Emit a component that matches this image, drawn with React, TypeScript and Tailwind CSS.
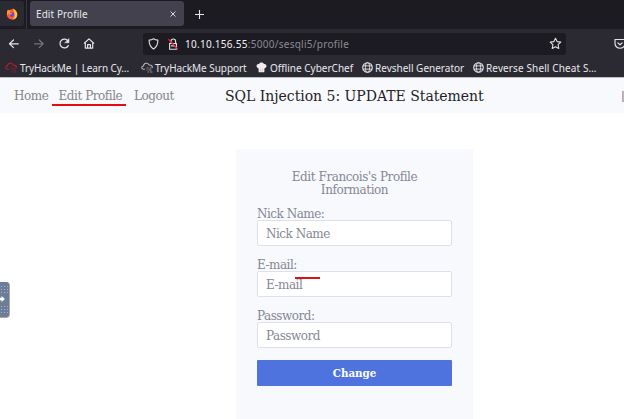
import React from "react";

const ui = "font-['Noto_Sans',sans-serif]";

function Fox() {
  return (
    <svg width="12" height="12" viewBox="0 0 12 12" className="shrink-0">
      <circle cx="6" cy="6.4" r="5.2" fill="#ff5a36" />
      <path d="M6.5 .2C9.5 1.5 11.6 4 11.3 7c-.3 3-2.5 4.6-5 4.7C9 10 9.6 6 6.5.2Z" fill="#ffc531" />
      <path d="M1 3.5 2 1.5l1.3 1.3L5 2.5 4 4.3 1 7Z" fill="#ff9a2b" />
      <circle cx="6" cy="6.6" r="2.3" fill="#7542e5" />
      <path d="M2.5 5c1.7-.8 3 0 4 .7-1.3 0-1.2 1.1-2.6 1.2Z" fill="#ff8a26" />
    </svg>
  );
}

function Cloud({ color }: { color: string }) {
  return (
    <svg width="12" height="12" viewBox="0 0 12 12" fill="none" stroke={color} strokeWidth="1.1" className="shrink-0">
      <path d="M4 7.2H2.5C0 7 .2 4 2.5 4 2.7.8 7 .4 8 3c2.4-.3 3.7 1.3 3.2 3" />
      <path d="M5.5 6h2M8.5 6h2M5.5 8h1M7.5 8h3M6.5 10h1.5M9 10h2.5" strokeOpacity=".75" />
    </svg>
  );
}

function Globe() {
  return (
    <svg width="11" height="11" viewBox="0 0 11 11" fill="none" stroke="#e6e6ea" className="shrink-0">
      <circle cx="5.5" cy="5.5" r="4.8" strokeWidth="1.1" />
      <ellipse cx="5.5" cy="5.5" rx="2.1" ry="4.8" strokeWidth=".9" />
      <path d="M1 3.9h9M1 7.1h9" strokeWidth=".9" />
    </svg>
  );
}

function ChefHat() {
  return (
    <svg width="11" height="11" viewBox="0 0 11 11" fill="#eeeeee" className="shrink-0">
      <path d="M2.5 6.2C-.3 5.5 0 1.8 2.8 2 4-.1 7-.1 8.1 2c3-.2 3.2 3.5.4 4.2L8.3 10.3H2.7Z" />
      <path d="M4.4 6.5v3M6.3 6.5v3" stroke="#b9b9bd" strokeWidth=".5" />
    </svg>
  );
}

function Field({ label, text, marked }: { label: string; text: string; marked?: boolean }) {
  return (
    <div className="mb-[11px] h-[40px]">
      <div className="h-[14px] text-[12px] leading-[16px] tracking-[-0.5px]">{label}</div>
      <div className="relative flex h-[26px] items-center rounded-[2px] border border-[#dfe0ea] bg-white pl-[8px] pt-px text-[12px] tracking-[-0.5px] text-[#858894]">
        {text}
        {marked && <span className="absolute left-[37px] top-[5px] h-[2px] w-[25px] bg-[#dc1018]" />}
      </div>
    </div>
  );
}

export default function App() {
  return (
    <div className="relative flex h-[419px] w-[624px] flex-col overflow-hidden bg-white font-['DejaVu_Serif',serif]">
      <div className={`h-[78px] shrink-0 border-b border-[#bdbdc2] bg-[#2b2a33] text-[#e8e8ec] ${ui}`}>
        <div className="flex h-[29px] bg-[#1c1b22]">
          <div className="mt-px flex h-[25px] w-[24px] items-center justify-center rounded-r-[3px] bg-[#2b2a33]">
            <Fox />
          </div>
          <div className="ml-[2px] h-[29px] w-px bg-[#36353d]" />
          <div className="ml-[3px] mt-px flex h-[25px] w-[154px] items-center justify-between rounded-[3px] bg-[#42414d] pl-[6px] pr-[8px]">
            <span className="whitespace-nowrap pt-px text-[10px] tracking-[0.08px]">Edit Profile</span>
            <svg width="6" height="6" viewBox="0 0 6 6" stroke="#d8d8dd"><path d="m.5.5 5 5m0-5-5 5" /></svg>
          </div>
          <svg className="ml-[11px] mt-[10px]" width="9" height="9" viewBox="0 0 9 9" stroke="#e8e8ec" strokeWidth="1.1"><path d="M4.5 0v9M0 4.5h9" /></svg>
        </div>
        <div className="flex h-[29px] items-center">
          <svg width="143" height="29" viewBox="0 0 143 29" fill="none" stroke="#e4e4e8" strokeWidth="1.2" strokeLinecap="round" strokeLinejoin="round" className="shrink-0">
            <path d="M18.3 14.8H9.5m4-3.8-4 3.8 4 3.8" />
            <path d="M34.5 14.8h8.7m-4-3.8 4 3.8-4 3.8" stroke="#74737d" />
            <path d="M68.1 12.1a4.4 4.4 0 1 0 .2 4.5" />
            <path d="M69 9.8v4h-4Z" fill="#e4e4e8" strokeWidth=".5" />
            <path d="m84.3 14.2 4.7-4.3 4.7 4.3M85.3 14v5.1h7.4V14M87.6 19v-3.4h2.8V19" />
          </svg>
          <div className="flex h-[22px] w-[423px] shrink-0 items-center rounded-[3px] bg-[#1c1b22]">
            <svg width="42" height="22" viewBox="0 0 42 22" fill="none" stroke="#dedee3" strokeWidth="1.15" className="shrink-0">
              <path d="M10.5 5.800c1.400 1 2.800 1.300 4.400 1.300 0 4.400-1.100 7-4.400 9-3.300-2-4.400-4.600-4.400-9 1.600 0 3-.3 4.400-1.300Z" strokeLinejoin="round" />
              <path d="M26.6 10.5h6.8v5.7h-6.8ZM28 10V8.3a2.3 2.3 0 0 1 4.6 0V10M28 12.8h4" />
              <path d="m25.5 6.2 9.2 10" stroke="#ef264f" strokeWidth="1.3" />
            </svg>
            <div className="whitespace-nowrap pt-px text-[10px] tracking-[0.27px] text-[#8c8b94]"><span className="text-[#f0f0f4]">10.10.156.55</span>:5000/sesqli5/profile</div>
            <svg className="ml-auto mr-[4px]" width="13" height="13" viewBox="0 0 13 13" fill="none" stroke="#e0e0e5" strokeWidth="1.1" strokeLinejoin="round">
              <path d="m6.5 1.3 1.6 3.3 3.7.5-2.7 2.6.7 3.8-3.3-1.8-3.3 1.8.7-3.8-2.7-2.6 3.7-.5Z" />
            </svg>
          </div>
          <svg className="ml-[48px] shrink-0" width="12" height="12" viewBox="0 0 12 12" fill="none" stroke="#e0e0e5" strokeWidth="1.2">
            <path d="M1 1.5h10v3.8c0 6.6-10 6.6-10 0ZM3.5 4.6 6 6.8l2.5-2.2" strokeLinejoin="round" />
          </svg>
        </div>
        <div className="flex h-[19px] items-center whitespace-nowrap text-[10px] leading-[19px]">
          <div className="ml-[5px] flex w-[136px] items-center gap-[3px]"><Cloud color="#b51d2b" /><span className="relative top-px tracking-[-0.1px]">TryHackMe | Learn Cy…</span></div>
          <div className="flex w-[115px] items-center gap-[2px]"><Cloud color="#b3b2b9" /><span className="relative top-px tracking-[-0.05px]">TryHackMe Support</span></div>
          <div className="flex w-[106px] items-center gap-[3px]"><ChefHat /><span className="relative top-px">Offline CyberChef</span></div>
          <div className="flex w-[111px] items-center gap-[2px]"><Globe /><span className="relative top-px">Revshell Generator</span></div>
          <div className="flex items-center gap-[2px]"><Globe /><span className="relative top-px tracking-[0.12px]">Reverse Shell Cheat S…</span></div>
        </div>
      </div>

      <div className="flex h-[35px] shrink-0 bg-[#f8f9fd] pl-[14px] text-[12px] leading-[36px] tracking-[-0.45px] text-[#858687]">
        <span className="w-[44.5px] whitespace-nowrap">Home</span>
        <span className="relative w-[75.5px] whitespace-nowrap">Edit Profile<i className="absolute left-[-7px] top-[26px] h-[2px] w-[74px] bg-[#e50b10]" /></span>
        <span className="w-[91px] whitespace-nowrap">Logout</span>
        <span className="whitespace-nowrap text-[14px] tracking-[-0.02px] text-[#222326]">SQL Injection 5: UPDATE Statement</span>
        <span className="ml-auto mt-[13px] h-[11px] w-[2px] border-y border-l border-[#c6a895] bg-[#b5b9c9]" />
      </div>

      <div className="ml-[236px] mt-[36px] h-[270px] w-[237px] shrink-0 bg-[#f8f9fd] px-[21px] pt-[22px] text-[#858894]">
        <div className="mb-[9px] text-center text-[12px] leading-[13px] tracking-[-0.43px]">Edit Francois's Profile<br />Information</div>
        <Field label="Nick Name:" text="Nick Name" />
        <Field label="E-mail:" text="E-mail" marked />
        <Field label="Password:" text="Password" />
        <button className="mt-[12px] block h-[26px] w-[195px] rounded-[1px] bg-[#4e73df] pt-px text-[10.3px] font-bold text-white">Change</button>
      </div>

      <div className="absolute left-0 top-[282px] h-[36px] w-[10px] rounded-r-[4px] bg-[#aaa9a4]">
        <svg width="9" height="35" viewBox="0 0 9 35">
          <path d="M0 0h6q3 0 3 3v29q0 3-3 3H0Z" fill="#6c7d99" />
          <path d="M1 4.5h7M1 7.5h7M1 10.5h7M1 24.5h7M1 27.5h7M1 30.5h7" stroke="#a7b3c7" strokeDasharray="1 2" />
          <path d="M0 15.7h1.5V14L5 17l-3.5 3v-1.7H0Z" fill="#fff" />
        </svg>
      </div>
    </div>
  );
}
